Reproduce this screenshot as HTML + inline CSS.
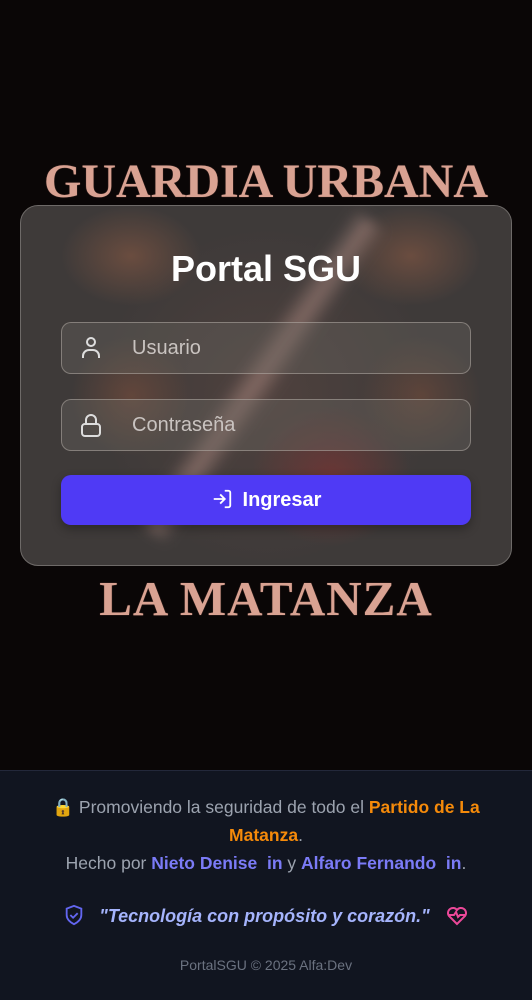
<!DOCTYPE html>
<html><head><meta charset="utf-8"><style>
*{margin:0;padding:0;box-sizing:border-box}
body{width:532px;height:1000px;background:#0a0606;font-family:"Liberation Sans",sans-serif;position:relative;overflow:hidden}
.t{position:absolute;left:0;width:532px;text-align:center;font-family:"Liberation Serif",serif;color:#d9a292;font-weight:bold;text-shadow:0 0 1px #8a5a50}
.card{position:absolute;left:20px;top:205px;width:492px;height:361px;border-radius:18px;border:1px solid #6e6a68;background:
radial-gradient(ellipse 70px 50px at 110px 50px,rgba(150,95,70,.5),transparent),
radial-gradient(ellipse 70px 50px at 390px 50px,rgba(150,95,70,.5),transparent),
radial-gradient(ellipse 80px 70px at 310px 270px,rgba(130,50,50,.6),transparent),
radial-gradient(ellipse 60px 60px at 110px 190px,rgba(130,80,60,.5),transparent),
radial-gradient(ellipse 60px 60px at 400px 190px,rgba(130,80,60,.45),transparent),
radial-gradient(ellipse 170px 170px at 246px 190px,rgba(90,70,65,.6),transparent),
#3e3a39;overflow:hidden}
.stripe{position:absolute;left:220px;top:-20px;width:40px;height:380px;background:linear-gradient(90deg,transparent,rgba(190,150,140,.5),transparent);transform:rotate(35deg);filter:blur(6px)}
.card h1{position:absolute;top:42px;width:100%;text-align:center;color:#fff;font-size:36px;font-weight:bold}
.inp{position:absolute;left:40px;width:410px;height:52px;border:1px solid rgba(200,190,185,.45);border-radius:10px;background:rgba(110,105,100,.35);color:#c9c3c0;font-size:20px;line-height:50px;padding-left:70px}
.inp svg{position:absolute;left:18px;top:13px}
.btn{position:absolute;left:40px;top:269px;width:410px;height:50px;border-radius:10px;background:#4f3af5;color:#fff;font-size:20px;font-weight:bold;text-align:center;line-height:50px;box-shadow:0 4px 10px rgba(0,0,0,.3)}
.foot{position:absolute;left:0;top:770px;width:532px;height:230px;background:#111520;border-top:1px solid #23283a;text-align:center;color:#9ca3af;font-size:17.5px}
.o{color:#f58a0a;font-weight:bold}.b{color:#7b7bf7;font-weight:bold}
</style></head><body>
<div class="t" style="top:154px;font-size:48px;letter-spacing:0px">GUARDIA URBANA</div>
<div class="t" style="top:570px;font-size:49px;letter-spacing:1px">LA MATANZA</div>
<div class="card">
<div class="stripe"></div>
<h1>Portal SGU</h1>
<div class="inp" style="top:116px"><svg width="22" height="24" viewBox="0 0 22 24" fill="none" stroke="#ddd" stroke-width="2"><circle cx="11" cy="6" r="4"/><path d="M3 22v-2a6 6 0 0 1 6-6h4a6 6 0 0 1 6 6v2"/></svg>Usuario</div>
<div class="inp" style="top:193px"><svg width="22" height="24" viewBox="0 0 22 24" fill="none" stroke="#ddd" stroke-width="2"><rect x="2" y="11" width="18" height="12" rx="3"/><path d="M6 11V7a5 5 0 0 1 10 0v4"/></svg>Contraseña</div>
<div class="btn"><svg width="22" height="22" viewBox="0 0 24 24" fill="none" stroke="#fff" stroke-width="2" style="vertical-align:-4px;margin-right:10px"><path d="M15 3h4a2 2 0 0 1 2 2v14a2 2 0 0 1-2 2h-4M10 17l5-5-5-5M15 12H3"/></svg>Ingresar</div>
</div>
<div class="foot">
<div style="margin-top:22px;line-height:28px">🔒 Promoviendo la seguridad de todo el <span class="o">Partido de La<br>Matanza</span>.<br>Hecho por <span class="b">Nieto Denise</span> &nbsp;<span class="b">in</span> y <span class="b">Alfaro Fernando</span> &nbsp;<span class="b">in</span>.</div>
<div style="margin-top:26px;font-size:18px;font-style:italic;font-weight:bold;color:#a5b4fc"><svg width="22" height="24" viewBox="0 0 24 24" fill="none" stroke="#6366f1" stroke-width="2" style="vertical-align:-5px;margin-right:14px"><path d="M12 2l8 3v7c0 5-4 8-8 10-4-2-8-5-8-10V5z"/><path d="M8 12l3 3 5-5"/></svg>"Tecnología con propósito y corazón." <svg width="24" height="24" viewBox="0 0 24 24" fill="none" stroke="#ec4899" stroke-width="2" style="vertical-align:-5px;margin-left:10px"><path d="M12 21l-8-8a5 5 0 0 1 8-6 5 5 0 0 1 8 6z"/><path d="M4 12h5l2-3 2 5 2-2h5"/></svg></div>
<div style="margin-top:30px;font-size:14px;color:#6b7280">PortalSGU © 2025 Alfa:Dev</div>
</div>
</body></html>
